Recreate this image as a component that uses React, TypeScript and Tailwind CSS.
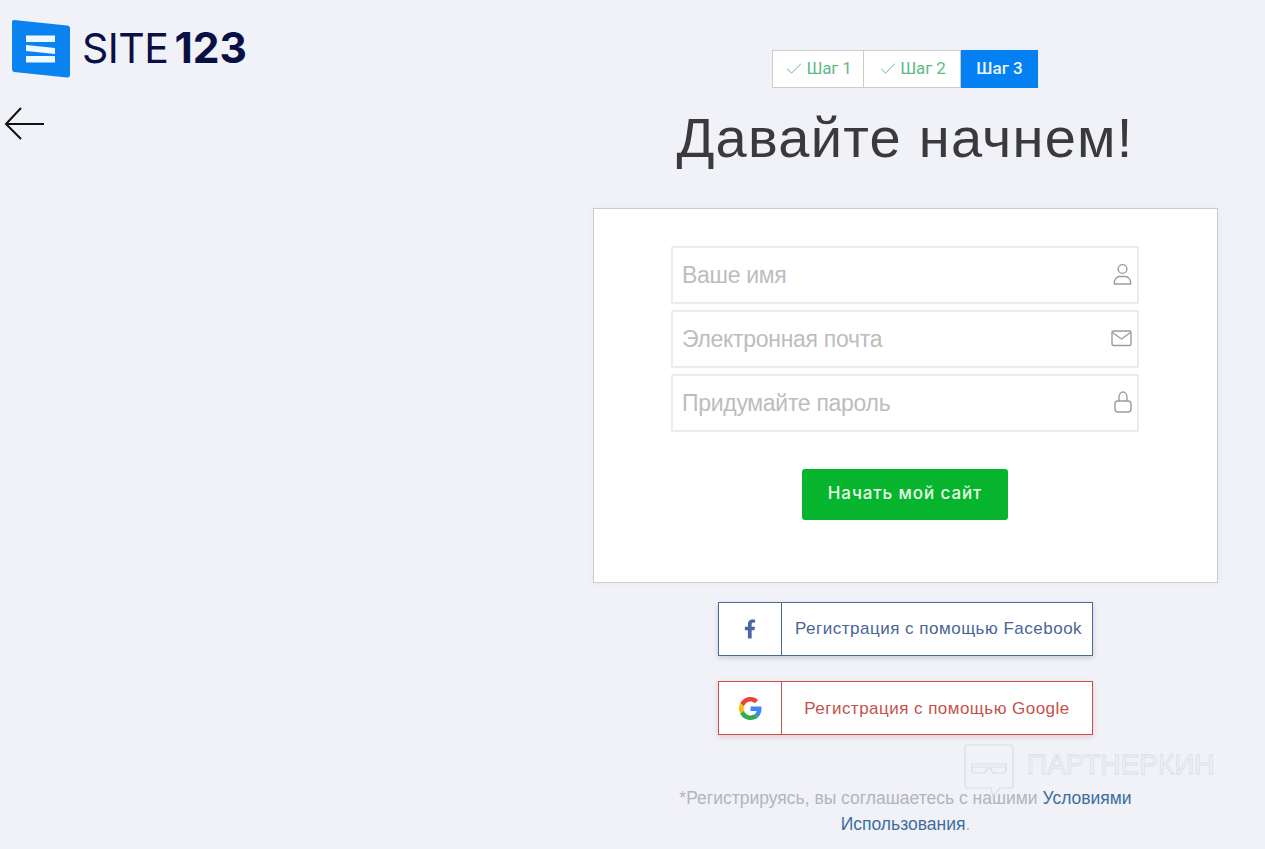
import React from 'react';
import { Check } from 'lucide-react';

const inputs = [
  { placeholder: 'Ваше имя', icon: 'user' },
  { placeholder: 'Электронная почта', icon: 'mail' },
  { placeholder: 'Придумайте пароль', icon: 'lock' },
];

const FieldIcon: React.FC<{ name: string }> = ({ name }) => (
  <svg width="22" height="22" viewBox="0 0 22 22" fill="none" stroke="#9c9c9c" strokeWidth="1.4" className="absolute right-[6px] top-[17px]">
    {name === 'user' && (
      <>
        <circle cx="11.5" cy="6" r="4.4" />
        <path d="M3.2 21 C3.2 16 6 13.500 8.500 13.500 L14.500 13.500 C17 13.500 19.800 16 19.800 21 Z" strokeLinejoin="round" />
      </>
    )}
    {name === 'mail' && (
      <>
        <rect x="1" y="4" width="19" height="14.500" rx="1.500" />
        <path d="M1.500 5.500 L10.500 12 L19.500 5.500" />
      </>
    )}
    {name === 'lock' && (
      <>
        <rect x="4" y="10" width="16" height="11" rx="3" />
        <path d="M8 10 V6.500 A4 5.500 0 0 1 16 6.500 V10" />
      </>
    )}
  </svg>
);

const Logo = () => (
  <svg width="58" height="58" viewBox="0 0 58 58">
    <path d="M2 0 L55 5.500 Q58 6 58 8 L58 55 Q58 58 55 57.500 L2 52 Q0 51.500 0 49 L0 2 Q0 0 2 0 Z" fill="#0a82f0" />
    <path d="M14 15.500 H43 V22 H14 Z M14 25 L43 28 V34 L14 31 Z M14 36 H43 V42.500 H14 Z" fill="#eef8ff" />
  </svg>
);

const GoogleIcon = () => (
  <svg width="23" height="23" viewBox="0 0 48 48">
    <path fill="#EA4335" d="M24 9.500c3.500 0 6.700 1.300 9.100 3.500l6.800-6.800C35.800 2.400 30.300 0 24 0 14.600 0 6.500 5.400 2.600 13.200l7.900 6.200C12.400 13.600 17.700 9.500 24 9.500z" />
    <path fill="#4285F4" d="M46.900 24.500c0-1.600-.1-3.100-.4-4.500H24v9h12.900c-.6 3-2.300 5.500-4.800 7.200l7.700 6c4.500-4.200 7.100-10.300 7.100-17.700z" />
    <path fill="#FBBC05" d="M10.500 28.600c-.5-1.400-.8-3-.8-4.600s.3-3.200.8-4.600l-7.900-6.200C.9 16.500 0 20.100 0 24s.9 7.500 2.600 10.800l7.900-6.200z" />
    <path fill="#34A853" d="M24 48c6.500 0 11.900-2.100 15.900-5.800l-7.700-6c-2.200 1.400-4.900 2.300-8.200 2.300-6.300 0-11.600-4.100-13.500-9.900l-7.900 6.200C6.500 42.600 14.600 48 24 48z" />
  </svg>
);

const Watermark = () => (
  <div className="absolute left-[964px] top-[744px] flex items-center gap-[13px] pointer-events-none">
    <svg width="50" height="56" viewBox="0 0 50 56" fill="none" stroke="#dcdde2" strokeWidth="1.2">
      <path d="M3 1 H46 Q49 1 49 4 V41 Q49 44 46 44 H36 L29 53 L27 44 H4 Q1 44 1 41 V4 Q1 1 3 1 Z" />
      <path d="M8 20 H42 V26 Q42 29 38 29 H31 Q28 29 27 25 H23 Q22 29 19 29 H12 Q8 29 8 26 Z M8 23 H42" />
    </svg>
    <span className="font-['Liberation_Sans',sans-serif] text-[28px] leading-none text-transparent [-webkit-text-stroke:0.8px_#dcdde2] -mt-[14px]">
      ПАРТНЕРКИН
    </span>
  </div>
);

export default function App() {
  return (
    <div className="relative flex h-[849px] overflow-hidden bg-[#f0f2f8] font-['Liberation_Sans',sans-serif]">
      <div className="w-[593px] shrink-0 pl-[12px] pt-[20px]">
        <div className="flex items-center gap-[13px]">
          <Logo />
          <div className="flex items-center gap-[6px] font-['Inter',sans-serif] leading-none text-[#0a1045] -mt-[2px] -ml-[1px]">
            <span className="text-[41px] tracking-[-0.5px]">SITE</span>
            <span className="text-[42.5px] font-bold">123</span>
          </div>
        </div>
        <svg width="44" height="36" viewBox="0 0 44 36" fill="none" stroke="#111" strokeWidth="2" className="-ml-[12px] mt-[28px]">
          <path d="M21 2 L6 18 L21 33 M6 18 H44" />
        </svg>
      </div>

      <main className="w-[625px] shrink-0 pt-[50px]">
        <div className="flex justify-center pr-[1px] font-['Roboto',sans-serif] text-[17px]">
          <div className="flex h-[38px] w-[92px] items-center justify-center gap-[2px] border border-[#ccc] bg-white tracking-[-0.2px] text-[#5fb98a]">
            <Check size={20} strokeWidth={1.2} />
            Шаг 1
          </div>
          <div className="flex h-[38px] w-[97px] items-center justify-center gap-[2px] border border-l-0 border-[#ccc] bg-white tracking-[-0.1px] text-[#5fb98a]">
            <Check size={20} strokeWidth={1.2} />
            Шаг 2
          </div>
          <div className="flex h-[38px] w-[77px] items-center justify-center bg-[#0580f2] font-medium text-[#eaf6ff]">Шаг 3</div>
        </div>

        <h1 className="mt-[15px] pr-[1px] text-center text-[56px] leading-[70px] tracking-[1.25px] text-[#3a3a3c]">Давайте начнем!</h1>

        <div className="mt-[35px] flex h-[375px] flex-col items-center border border-[#cccccc] bg-white pr-[1px] pt-[37px] shadow-[0_0_8px_rgba(0,0,0,0.04)]">
          <div className="flex flex-col gap-[6px]">
            {inputs.map((item) => (
              <div key={item.placeholder} className="relative h-[58px] w-[468px]">
                <input
                  placeholder={item.placeholder}
                  className="h-full w-full rounded-[2px] border-2 border-[#ececec] bg-white pl-[9px] pr-[34px] text-[23px] tracking-[-0.3px] placeholder:text-[#bdbdbd]"
                />
                <FieldIcon name={item.icon} />
              </div>
            ))}
          </div>
          <button className="mt-[37px] h-[51px] w-[206px] rounded-[3px] bg-[#07b42e] pb-[1px] font-['Inter',sans-serif] text-[17px] font-medium tracking-[0.9px] text-[#e8fbe9]">
            Начать мой сайт
          </button>
        </div>

        <div className="mt-[19px] flex flex-col items-center gap-[25px]">
          <div className="flex h-[54px] w-[375px] border border-[#4a6a9c] bg-white text-[#4a6596] shadow-[0_2px_5px_rgba(0,0,0,0.16)]">
            <div className="flex w-[63px] shrink-0 items-center justify-center border-r border-[#4a6a9c]">
              <svg width="12" height="20" viewBox="0 0 320 512" fill="#4a66a5">
                <path d="M279 288l14-93h-89v-60c0-25 12-50 52-50h41V6s-37-6-72-6c-73 0-121 44-121 125v70H23v93h81v224h100V288z" />
              </svg>
            </div>
            <span className="flex flex-1 items-center pl-[13px] text-[17px] tracking-[0.5px]">Регистрация с помощью Facebook</span>
          </div>
          <div className="flex h-[54px] w-[375px] border border-[#c9504a] bg-white text-[#c4524c] shadow-[0_2px_5px_rgba(200,60,60,0.22)]">
            <div className="flex w-[63px] shrink-0 items-center justify-center border-r border-[#c9504a]">
              <GoogleIcon />
            </div>
            <span className="flex flex-1 items-center justify-center pt-[1px] text-[17px] tracking-[0.47px]">Регистрация с помощью Google</span>
          </div>
        </div>

        <p className="mx-auto mt-[50px] w-[470px] text-center text-[17.5px] leading-[26px] text-[#b3b5bb]">
          *Регистрируясь, вы соглашаетесь с нашими <span className="text-[#3f6d9e]">Условиями</span>
          <br />
          <span className="text-[#3f6d9e]">Использования</span>.
        </p>
      </main>

      <Watermark />
    </div>
  );
}
